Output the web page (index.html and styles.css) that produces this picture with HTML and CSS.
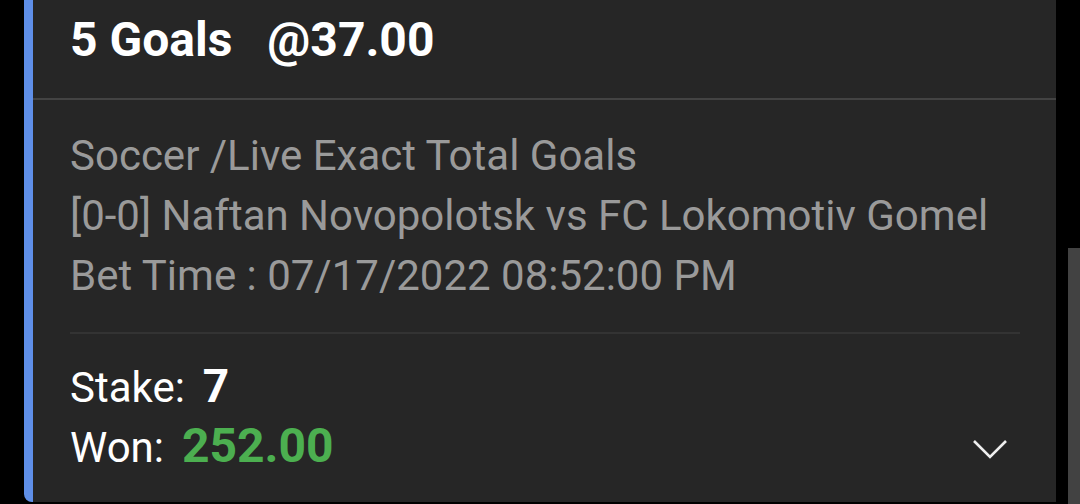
FILE: index.html
```html
<!DOCTYPE html>
<html lang="en">
<head>
    <meta charset="UTF-8">
    <meta name="viewport" content="width=device-width, initial-scale=1.0">
    <title>Bet slip</title>
    <link rel="stylesheet" href="styles.css">
</head>
<body>
    <main class="bet">
        <div class="bet__header">
            <span class="bet__pick">5 Goals</span>
            <span class="bet__odds">@37.00</span>
        </div>
        <div class="bet__body">
            <div class="bet__info">
                <div class="bet__line">Soccer /Live Exact Total Goals</div>
                <div class="bet__line">[0-0] Naftan Novopolotsk vs FC Lokomotiv Gomel</div>
                <div class="bet__line">Bet Time : 07/17/2022 08:52:00 PM</div>
            </div>
            <div class="bet__summary">
                <div class="bet__row">
                    <span class="bet__label">Stake:</span>
                    <span class="bet__value">7</span>
                </div>
                <div class="bet__row">
                    <span class="bet__label">Won:</span>
                    <span class="bet__value bet__value--won">252.00</span>
                    <button class="bet__toggle" aria-label="Show details">
                        <svg class="bet__toggle-image" viewBox="0 0 36 20">
                            <path d="M2 2L18 18L34 2" />
                        </svg>
                    </button>
                </div>
            </div>
        </div>
    </main>
    <div class="scrollbar"></div>
</body>
</html>
```

FILE: styles.css
```css
body {
    margin: 0;
    height: 504px;
    overflow: hidden;

    background: #000000;

    font-family: Roboto, "Noto Sans", sans-serif;

    position: relative;
}

.bet {
    box-sizing: border-box;
    width: 1032px;
    height: 502px;
    margin-left: 24px;

    display: flex;
    flex-direction: column;

    background: #262626;
    border-left: 9px solid #5f8fe8;
    border-bottom-left-radius: 8px;
}

.bet__header {
    height: 100px;
    box-sizing: border-box;
    padding: 13px 37px 0;

    display: flex;
    gap: 35px;

    border-bottom: 2px solid #434343;

    font-size: 48px;
    font-weight: bold;
    line-height: 54px;

    color: #FFFFFF;
}

.bet__body {
    flex: 1 0 0;
    padding: 26px 36px 0 37px;
}

.bet__info {
    padding-bottom: 26px;
    border-bottom: 2px solid #333333;
}

.bet__line {
    font-size: 42px;
    line-height: 60px;

    color: #9a9a9a;
    white-space: nowrap;
}

.bet__summary {
    padding-top: 22px;
}

.bet__row {
    height: 60px;

    display: flex;
    align-items: baseline;
    gap: 18px;

    color: #FFFFFF;
}

.bet__label {
    font-size: 42px;
    line-height: 60px;
}

.bet__value {
    font-size: 46px;
    font-weight: bold;
    line-height: 60px;
}

.bet__value--won {
    font-size: 48px;
    color: #4caf50;
}

.bet__toggle {
    align-self: center;
    margin: 6px 12px 0 auto;
    width: 36px;
    height: 20px;

    background: transparent;
    border: 0;
    padding: 0;

    color: #eeeeee;
}

.bet__toggle-image {
    display: block;
    width: 100%;
    height: 100%;

    fill: none;
    stroke: currentColor;
    stroke-width: 2.6;
}

.scrollbar {
    position: absolute;
    right: 0;
    top: 248px;
    bottom: 0;

    width: 12px;
    background: #424242;
}
```
